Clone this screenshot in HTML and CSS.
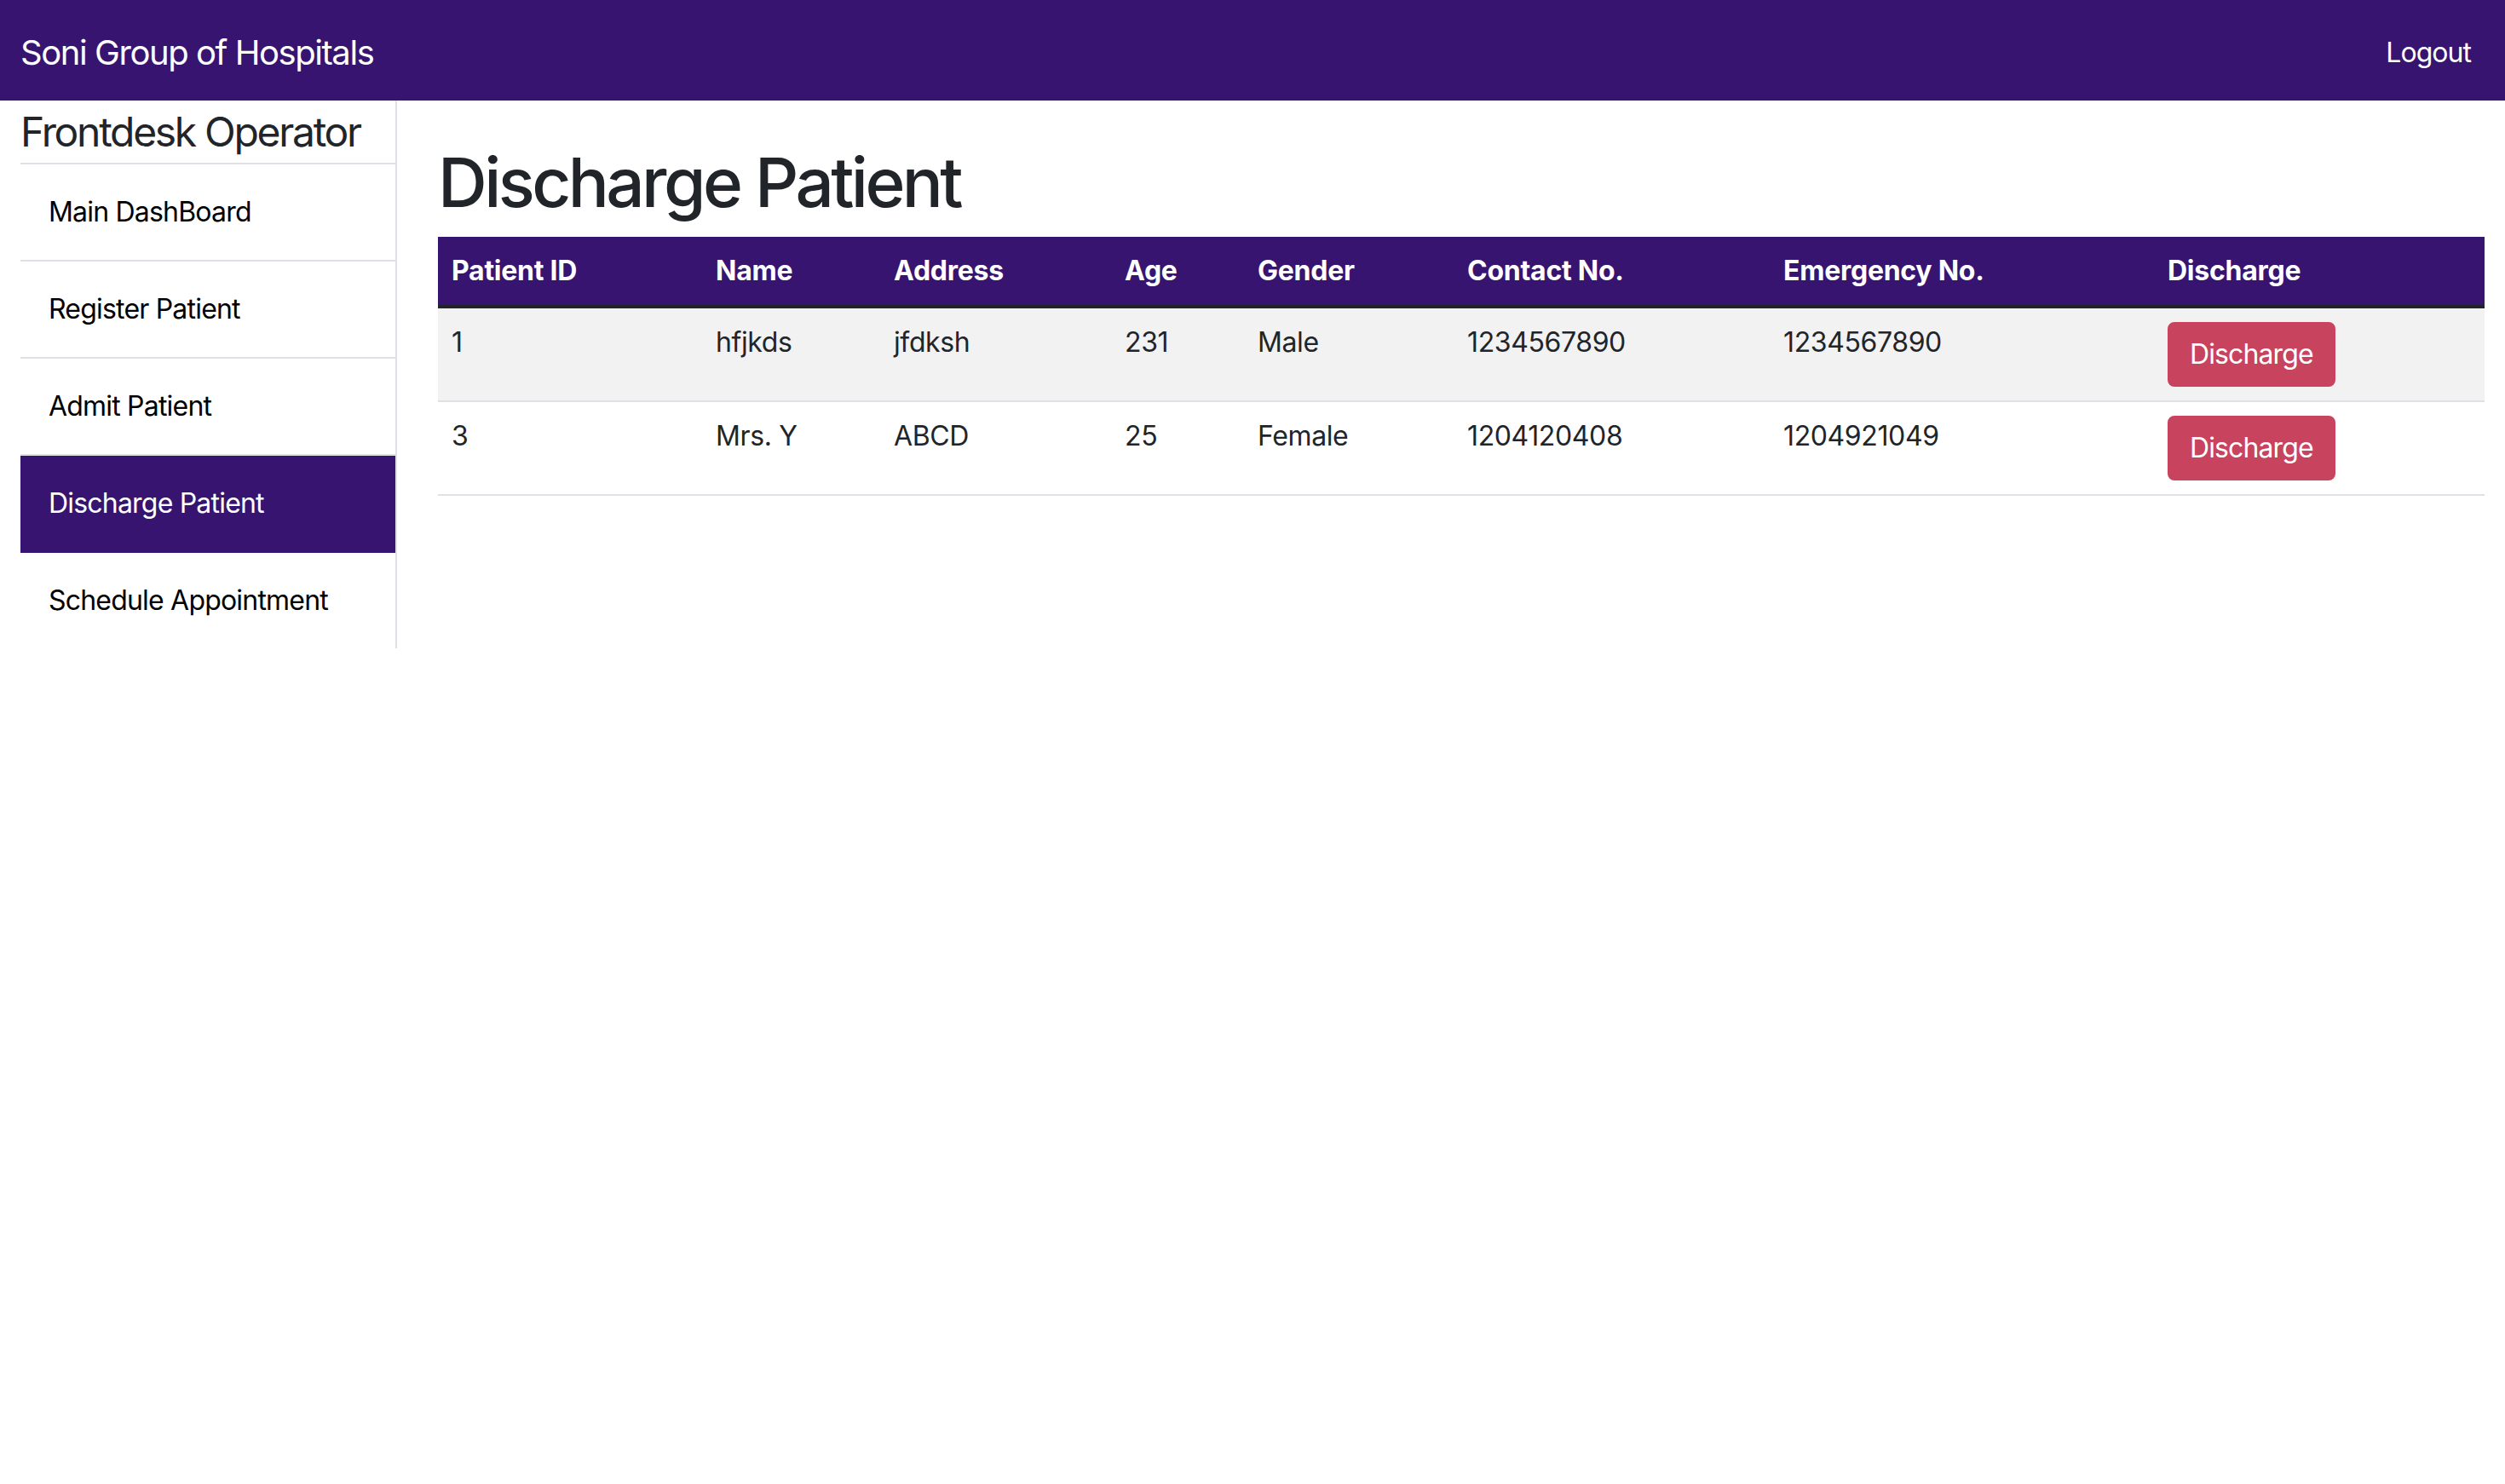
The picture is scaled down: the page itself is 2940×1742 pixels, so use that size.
FILE: index.html
```html
<!DOCTYPE html>
<html lang="en">
<head>
<meta charset="utf-8">
<title>Discharge Patient</title>
<link rel="stylesheet" href="styles.css">
</head>
<body>
<nav class="navbar">
  <a class="brand" href="#">Soni Group of Hospitals</a>
  <a class="nav-link" href="#">Logout</a>
</nav>
<div class="layout">
  <aside class="sidebar">
    <h4 class="side-title">Frontdesk Operator</h4>
    <ul class="menu">
      <li class="menu-item"><a href="#">Main DashBoard</a></li>
      <li class="menu-item"><a href="#">Register Patient</a></li>
      <li class="menu-item"><a href="#">Admit Patient</a></li>
      <li class="menu-item active"><a href="#">Discharge Patient</a></li>
      <li class="menu-item last"><a href="#">Schedule Appointment</a></li>
    </ul>
  </aside>
  <main class="main">
    <h1 class="title">Discharge Patient</h1>
    <table class="table">
      <colgroup>
        <col class="c-id"><col class="c-name"><col class="c-addr"><col class="c-age">
        <col class="c-gender"><col class="c-contact"><col class="c-emerg"><col class="c-dis">
      </colgroup>
      <thead>
        <tr>
          <th>Patient ID</th><th>Name</th><th>Address</th><th>Age</th>
          <th>Gender</th><th>Contact No.</th><th>Emergency No.</th><th>Discharge</th>
        </tr>
      </thead>
      <tbody>
        <tr class="striped">
          <td>1</td><td>hfjkds</td><td>jfdksh</td><td>231</td>
          <td>Male</td><td>1234567890</td><td>1234567890</td>
          <td><button class="btn">Discharge</button></td>
        </tr>
        <tr>
          <td>3</td><td>Mrs. Y</td><td>ABCD</td><td>25</td>
          <td>Female</td><td>1204120408</td><td>1204921049</td>
          <td><button class="btn">Discharge</button></td>
        </tr>
      </tbody>
    </table>
  </main>
</div>
</body>
</html>
```
FILE: styles.css
```css
* { box-sizing: border-box; }
html, body {
  margin: 0;
  padding: 0;
  background: #fff;
  font-family: "Inter", "Roboto", "Liberation Sans", sans-serif;
  color: #212529;
  font-size: 32px;
  line-height: 1.5;
}
a { text-decoration: none; }

.navbar {
  height: 118px;
  background: #371470;
  display: flex;
  align-items: center;
  justify-content: space-between;
  padding: 5px 24px 0 24px;
}
.brand {
  color: #fff;
  font-size: 40px;
  line-height: 60px;
  letter-spacing: -0.036em;
}
.nav-link {
  color: #fff;
  font-size: 32px;
  line-height: 48px;
  padding: 0 16px;
  letter-spacing: -0.03em;
}

.layout {
  display: flex;
  align-items: flex-start;
}
.sidebar {
  width: 466px;
  flex: 0 0 466px;
  padding-left: 24px;
  border-right: 2px solid #dee2e6;
}
.side-title {
  margin: 0;
  padding: 8px 0 7px 0;
  font-size: 48px;
  font-weight: 400;
  line-height: 1.2;
  color: #212529;
  letter-spacing: -0.048em;
  white-space: nowrap;
  border-bottom: 2px solid #dee2e6;
}
.menu {
  list-style: none;
  margin: 0;
  padding: 0;
}
.menu-item {
  border-bottom: 2px solid #dee2e6;
}
.menu-item a {
  display: block;
  padding: 32px 33px;
  color: #000;
  font-size: 32px;
  line-height: 48px;
  letter-spacing: -0.025em;
}
.menu-item.active {
  background: #371470;
  border-bottom-color: #371470;
}
.menu-item.active a { color: #fff; }
.menu-item.last { border-bottom: none; }

.main {
  flex: 1;
  padding: 48px 24px 0 48px;
}
.title {
  margin: 0 0 16px 0;
  font-size: 80px;
  font-weight: 500;
  line-height: 1.2;
  letter-spacing: -0.045em;
  color: #212529;
}
.table {
  width: 100%;
  border-collapse: collapse;
  table-layout: fixed;
}
.c-id { width: 310px; }
.c-name { width: 209px; }
.c-addr { width: 271px; }
.c-age { width: 156px; }
.c-gender { width: 246px; }
.c-contact { width: 371px; }
.c-emerg { width: 451px; }
.c-dis { width: 388px; }

.table th {
  background: #371470;
  color: #fff;
  font-weight: 700;
  text-align: left;
  padding: 16px;
  line-height: 48px;
  letter-spacing: -0.008em;
  border-bottom: 4px solid #212529;
}
.table td {
  padding: 16px;
  line-height: 48px;
  vertical-align: top;
  letter-spacing: -0.012em;
  border-bottom: 2px solid #dee2e6;
  color: #212529;
}
.table tr.striped td { background: #f2f2f2; }
.btn {
  font-family: inherit;
  font-size: 32px;
  line-height: 48px;
  padding: 12px 24px;
  border: 2px solid #c8435d;
  background: #c8435d;
  color: #fff;
  border-radius: 8px;
  letter-spacing: -0.028em;
  cursor: pointer;
}
```
